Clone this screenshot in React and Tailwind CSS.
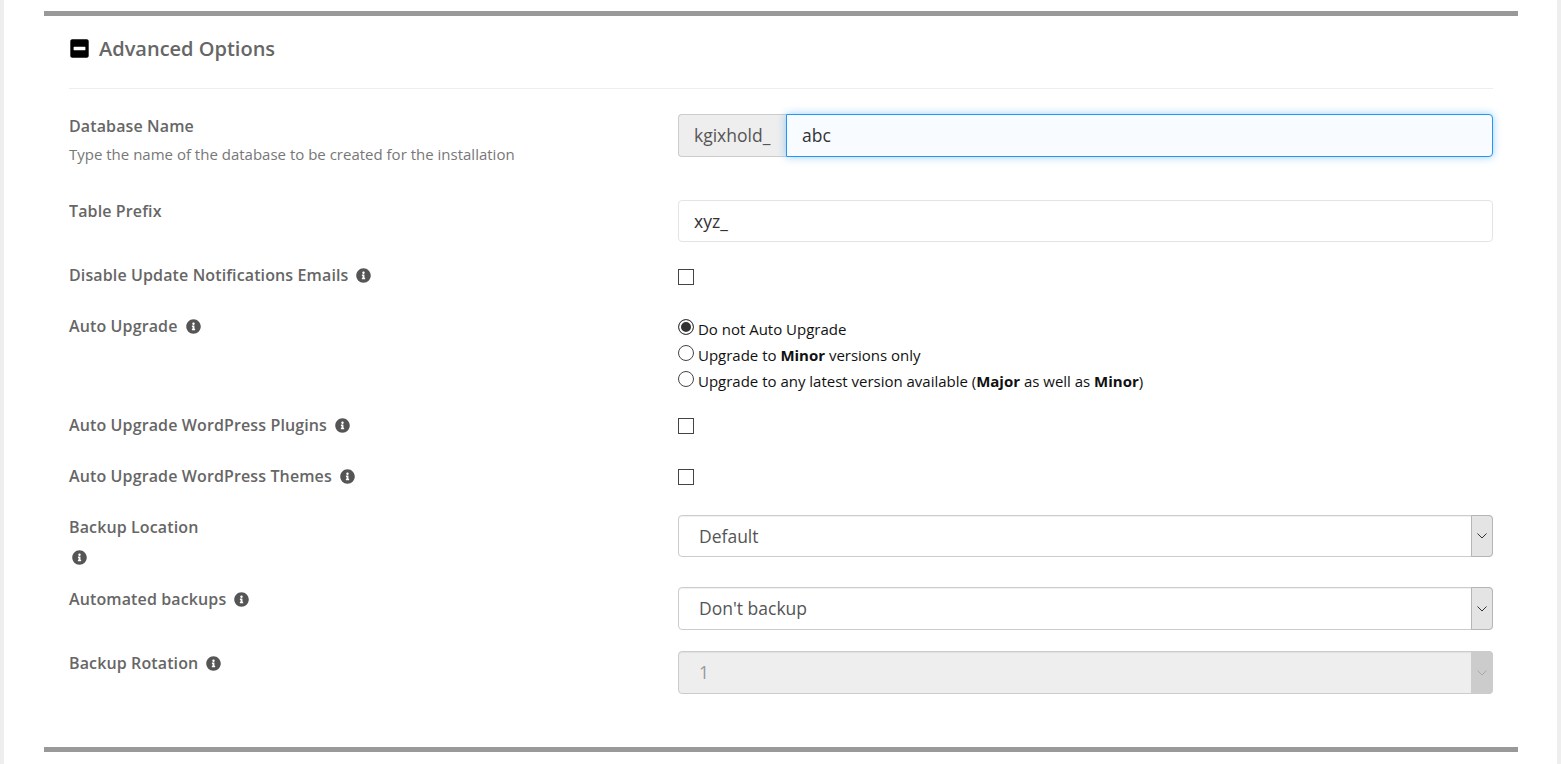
import React from 'react';
import { FaInfoCircle, FaMinusSquare } from 'react-icons/fa';

function Info({ className = 'ml-2' }) {
  return <FaInfoCircle className={`inline-block w-[15px] h-[15px] text-[#555] align-[-2px] ${className}`} />;
}

function Row({ label, info, hint, height, children }) {
  return (
    <div className="grid grid-cols-[609px_815px]" style={{ height }}>
      <div>
        <div className="text-[16px] leading-6 font-semibold tracking-[0.12px] text-[#666]">
          {label}
          {info && <Info />}
        </div>
        {hint}
      </div>
      <div>{children}</div>
    </div>
  );
}

function Check() {
  return <input type="checkbox" className="block appearance-none w-4 h-4 border border-[#444] bg-white" />;
}

function Radio({ checked, children }) {
  return (
    <label className="flex items-start h-[26px] text-[15px] leading-[24px] tracking-[-0.01px] text-[#111]">
      <input
        type="radio"
        name="auto_upgrade"
        defaultChecked={checked}
        className="appearance-none w-4 h-4 mt-[2px] mr-1 rounded-full border border-[#444] bg-white checked:bg-[#333] checked:shadow-[inset_0_0_0_2px_white]"
      />
      <span>{children}</span>
    </label>
  );
}

function Select({ value, disabled, height }) {
  return (
    <div className="relative" style={{ height }}>
      <select
        disabled={disabled}
        defaultValue={value}
        className={`block appearance-none w-full h-full pl-5 rounded border border-[#ccc] text-[17.5px] outline-none shadow-[inset_0_1px_1px_rgba(0,0,0,0.06)] ${disabled ? 'bg-[#eee] text-[#999]' : 'bg-white text-[#555]'}`}
      >
        <option>{value}</option>
      </select>
      <div className={`absolute right-0 top-0 bottom-0 w-[22px] flex items-center justify-center rounded-r border ${disabled ? 'bg-[#ccc] border-[#ccc]' : 'bg-[#e4e4e4] border-[#b5b5b5]'}`}>
        <svg width="10" height="6" viewBox="0 0 10 6" fill="none" stroke={disabled ? '#aaa' : '#333'} strokeWidth="1">
          <path d="M0.5 0.5 L5 5 L9.5 0.5" />
        </svg>
      </div>
    </div>
  );
}

export default function App() {
  return (
    <div className="w-[1561px] h-[764px] overflow-hidden bg-white border-l-4 border-r-4 border-[#eeeeee] font-['Open_Sans',sans-serif]">
      <div className="w-[1474px] ml-[40px] mt-[11px] border-t-[5px] border-[#999] h-[741px] border-b-[5px] px-[25px]">
        <div className="h-[73px] border-b border-[#eee] flex items-start pt-[21px]">
          <FaMinusSquare className="w-[21px] h-[21px] text-black mr-[9px] mt-[1px]" />
          <h3 className="text-[20px] leading-[24px] font-semibold text-[#666]">Advanced Options</h3>
        </div>

        <div className="pt-[25px]">
          <Row
            label="Database Name"
            height={85}
            hint={<p className="text-[15px] leading-5 text-[#777] mt-[6px]">Type the name of the database to be created for the installation</p>}
          >
            <div className="flex h-[43px]">
              <span className="w-[108px] flex items-center pl-[15px] bg-[#eee] border border-r-0 border-[#ccc] rounded-l text-[17.5px] text-[#555]">kgixhold_</span>
              <input
                defaultValue="abc"
                className="flex-1 pl-[15px] bg-[#f8fbff] border border-[#2196f3] rounded-r text-[17.5px] text-[#333] outline-none shadow-[0_0_8px_rgba(33,150,243,0.45)]"
              />
            </div>
          </Row>

          <Row label="Table Prefix" height={64}>
            <input
              defaultValue="xyz_"
              className="block w-full h-[42px] mt-[1px] pl-[15px] bg-white border border-[#e4e4e4] rounded text-[17.5px] text-[#333] outline-none"
            />
          </Row>

          <Row label="Disable Update Notifications Emails" info height={51}>
            <div className="pt-[6px]"><Check /></div>
          </Row>

          <Row label="Auto Upgrade" info height={99}>
            <div className="pt-[3px]">
              <Radio checked>Do not Auto Upgrade</Radio>
              <Radio>Upgrade to <b className="font-bold">Minor</b> versions only</Radio>
              <Radio>Upgrade to any latest version available (<b className="font-bold">Major</b> as well as <b className="font-bold">Minor</b>)</Radio>
            </div>
          </Row>

          <Row label="Auto Upgrade WordPress Plugins" info height={51}>
            <div className="pt-[5px]"><Check /></div>
          </Row>

          <Row label="Auto Upgrade WordPress Themes" info height={51}>
            <div className="pt-[5px]"><Check /></div>
          </Row>

          <Row
            label="Backup Location"
            height={72}
            hint={<div className="leading-6 pl-[3px] mt-[6px]"><Info className="" /></div>}
          >
            <Select value="Default" height={42} />
          </Row>

          <Row label="Automated backups" info height={64}>
            <Select value="Don't backup" height={43} />
          </Row>

          <Row label="Backup Rotation" info height={43}>
            <Select value="1" disabled height={43} />
          </Row>
        </div>
      </div>
    </div>
  );
}
